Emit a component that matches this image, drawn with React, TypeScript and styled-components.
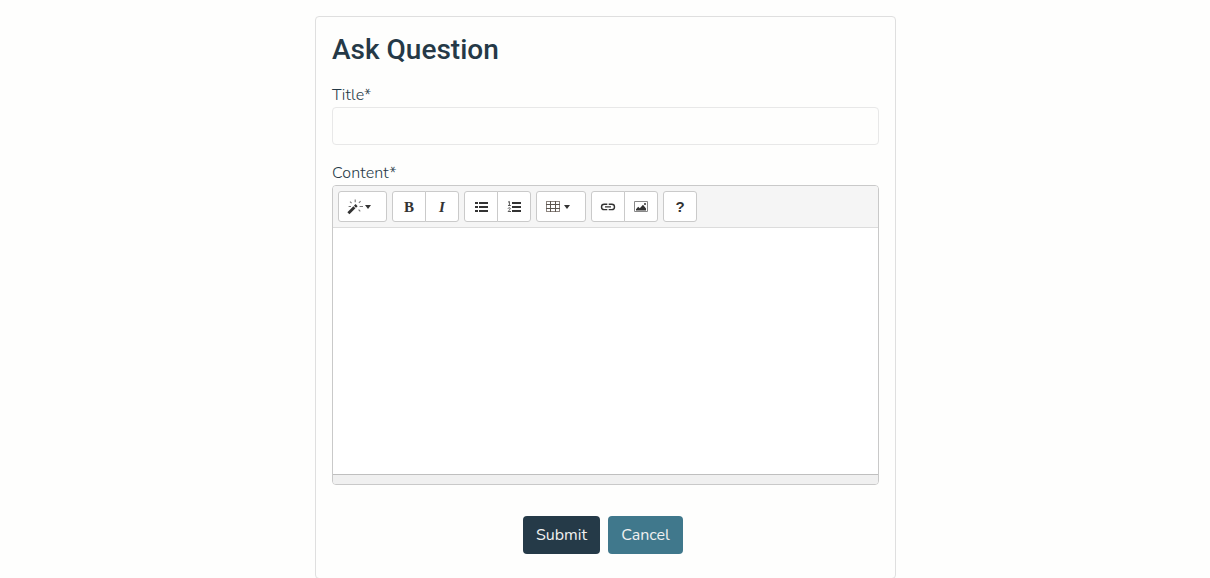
import React from "react";
import styled, { createGlobalStyle } from "styled-components";

const GlobalStyle = createGlobalStyle`
  *, *::before, *::after { box-sizing: border-box; }
  html, body { margin: 0; height: 100%; overflow: hidden; }
  body {
    background: #fefefd;
    color: #253947;
    font: 400 16px/24px Nunito, Lato, "Open Sans", sans-serif;
  }
`;

const Page = styled.main`
  display: flex;
  justify-content: center;
  padding: 16px 0 0 1px;
`;

const Card = styled.form`
  width: 581px;
  height: 563px;
  padding: 16px;
  border: 1px solid #dfdfdf;
  border-radius: 4px;
`;

const Heading = styled.h1`
  margin: 0 0 16px;
  font: 500 28px/33.6px Roboto, sans-serif;
  color: #253947;
`;

const Field = styled.div<{ $gap: number }>`
  display: flex;
  flex-direction: column;
  margin-bottom: ${(p) => p.$gap}px;
`;

const Label = styled.label`
  height: 24px;
  font-weight: 360;
  letter-spacing: 0.12px;
`;

const Input = styled.input`
  width: 100%;
  height: 38px;
  padding: 6px 12px;
  border: 1px solid #e8e8e8;
  border-radius: 4px;
  background: transparent;
  font: inherit;
  outline: none;
`;

const Editor = styled.div`
  display: flex;
  flex-direction: column;
  height: 300px;
  border: 1px solid #c9c9c9;
  border-radius: 4px;
  overflow: hidden;
`;

const Toolbar = styled.div`
  display: flex;
  gap: 5px;
  height: 42px;
  padding: 5px;
  background: #f5f5f5;
  border-bottom: 1px solid #dcdcdc;
`;

const Group = styled.div`
  display: flex;
`;

const Tool = styled.button<{ $menuWidth?: number }>`
  display: flex;
  align-items: center;
  justify-content: center;
  width: ${(p) => p.$menuWidth ?? 34}px;
  height: 31px;
  padding: 2px ${(p) => (p.$menuWidth ? 7 : 0)}px 0 0;
  border: 1px solid #cacaca;
  border-radius: 3px;
  background: #fff;
  color: #333;

  &:not(:first-child) {
    margin-left: -1px;
    border-top-left-radius: 0;
    border-bottom-left-radius: 0;
  }
  &:not(:last-child) {
    border-top-right-radius: 0;
    border-bottom-right-radius: 0;
  }
`;

const Glyph = styled.span<{ $italic?: boolean; $sans?: boolean }>`
  font: ${(p) => (p.$italic ? "italic" : "normal")} 700 15px/16px
    ${(p) => (p.$sans ? '"Liberation Sans", sans-serif' : '"Liberation Serif", serif')};
`;

const Icon = styled.svg`
  display: block;
  width: 16px;
  height: 16px;
  flex: none;
`;

const Caret = styled.i`
  margin: 0 0 0 2px;
  border: 3px solid transparent;
  border-top: 4px solid #333;
  border-bottom: 0;
`;

const Canvas = styled.div`
  flex: 1;
  background: #fff;
`;

const ResizeBar = styled.div`
  height: 10px;
  background: #f0f0f0;
  border-top: 1px solid #bfbfbf;
`;

const Actions = styled.div`
  display: flex;
  justify-content: center;
  gap: 8px;
  padding-right: 5px;
`;

const Action = styled.button<{ $color: string; $width: number }>`
  width: ${(p) => p.$width}px;
  height: 38px;
  padding: 0;
  border: 0;
  border-radius: 4px;
  background: ${(p) => p.$color};
  color: #f0f0f0;
  font: inherit;
  font-weight: 430;
`;

const WandIcon = () => (
  <Icon viewBox="0 0 16 16">
    <path d="M1.4 14.2 7.4 8.3" stroke="#333" strokeWidth="2.9" />
    <path d="M8 7.7 9.6 6.1" stroke="#333" strokeWidth="2.9" />
    <path
      d="M3 2.6 4.6 4.2M8.2.6v2.6M13.6 2.2l-1.7 1.7M12.6 7.5H16M11.6 10.6l1.7 1.7M1.6 7.5H4"
      stroke="#777"
      strokeWidth="1.1"
    />
  </Icon>
);

const BulletsIcon = () => (
  <Icon viewBox="0 0 16 16" fill="#333" shapeRendering="crispEdges">
    <path d="M2 3h3v2H2zM2 7h3v2H2zM2 11h3v2H2zM6 3h9v2H6zM6 7h9v2H6zM6 11h9v2H6z" />
  </Icon>
);

const NumbersIcon = () => (
  <Icon viewBox="0 0 16 16" fill="none">
    <path d="M6 3h9v2H6zM6 7h9v2H6zM6 11h9v2H6z" fill="#333" shapeRendering="crispEdges" />
    <path
      d="M2 3.2 3.4 2.5v4M2 6.5h2.8M2 9.6c.5-1.2 2.5-1.1 2.3.2-.1.9-1.8 1.6-2.2 2.7H5"
      stroke="#555"
      strokeWidth="1"
    />
  </Icon>
);

const TableIcon = () => (
  <Icon viewBox="0 0 16 16" fill="none" shapeRendering="crispEdges">
    <path d="M.5 2.5h13v10H.5z" stroke="#8d8580" />
    <path d="M4.5 2v11M9.5 2v11M0 5.5h14M0 9.5h14" stroke="#5d5650" />
  </Icon>
);

const LinkIcon = () => (
  <Icon viewBox="0 0 16 16" fill="none" stroke="#333" strokeWidth="1.4">
    <path d="M7.3 5.2H4.2a2.7 2.7 0 0 0 0 5.4h3.1M8.7 5.2h3.1a2.7 2.7 0 0 1 0 5.4H8.7M5 7.9h6" />
  </Icon>
);

const PictureIcon = () => (
  <Icon viewBox="0 0 16 16" fill="none">
    <path d="M1.5 2.5h13v10h-13z" stroke="#888" />
    <path d="M3 11.5v-1.3l2.2-2.4 1.6 1.4L10 5.8l3 3.8v1.9z" fill="#333" />
    <circle cx="12" cy="5" r="1" fill="#333" />
  </Icon>
);

export default function App() {
  return (
    <>
      <GlobalStyle />
      <Page>
        <Card onSubmit={(e) => e.preventDefault()}>
          <Heading>Ask Question</Heading>
          <Field $gap={16}>
            <Label htmlFor="title">Title*</Label>
            <Input id="title" />
          </Field>
          <Field $gap={31}>
            <Label>Content*</Label>
            <Editor>
              <Toolbar>
                <Group>
                  <Tool type="button" $menuWidth={49} aria-label="Style"><WandIcon /><Caret /></Tool>
                </Group>
                <Group>
                  <Tool type="button"><Glyph>B</Glyph></Tool>
                  <Tool type="button"><Glyph $italic>I</Glyph></Tool>
                </Group>
                <Group>
                  <Tool type="button" aria-label="Unordered list"><BulletsIcon /></Tool>
                  <Tool type="button" aria-label="Ordered list"><NumbersIcon /></Tool>
                </Group>
                <Group>
                  <Tool type="button" $menuWidth={50} aria-label="Table"><TableIcon /><Caret /></Tool>
                </Group>
                <Group>
                  <Tool type="button" aria-label="Link"><LinkIcon /></Tool>
                  <Tool type="button" aria-label="Picture"><PictureIcon /></Tool>
                </Group>
                <Group>
                  <Tool type="button"><Glyph $sans>?</Glyph></Tool>
                </Group>
              </Toolbar>
              <Canvas />
              <ResizeBar />
            </Editor>
          </Field>
          <Actions>
            <Action type="submit" $color="#253a48" $width={77}>Submit</Action>
            <Action type="button" $color="#40788c" $width={75}>Cancel</Action>
          </Actions>
        </Card>
      </Page>
    </>
  );
}
